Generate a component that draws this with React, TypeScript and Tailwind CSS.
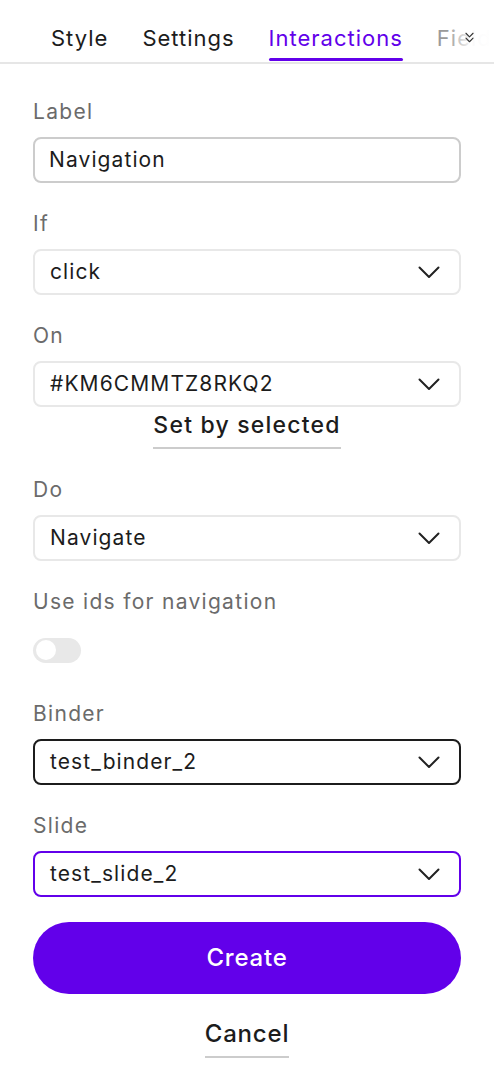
import { ChevronsDown } from "lucide-react";

const font = { fontFamily: "Inter, 'Noto Sans', sans-serif" };

function Chevron() {
  return (
    <svg width="22" height="13" viewBox="0 0 22 13" fill="none" className="shrink-0">
      <path d="M1.5 1.5 L11 11 L20.5 1.5" stroke="#222" strokeWidth="2" strokeLinecap="round" strokeLinejoin="round" />
    </svg>
  );
}

function FieldLabel({ children }: { children: React.ReactNode }) {
  return (
    <div className="h-[28px] leading-[28px] text-[21px] tracking-[1.3px] text-[#6b6b6b] mb-[11px] whitespace-nowrap">
      {children}
    </div>
  );
}

function Select({ value, border }: { value: string; border: string }) {
  return (
    <div className={`h-[46px] w-full rounded-[8px] border-2 ${border} bg-white flex items-center justify-between pl-[15px] pr-[19px]`}>
      <span className="text-[21px] tracking-[1.1px] text-[#1c1c1c]">{value}</span>
      <Chevron />
    </div>
  );
}

export default function App() {
  const tabs = ["Style", "Settings", "Interactions", "Fields"];
  return (
    <div className="w-[494px] h-[1084px] bg-white overflow-hidden" style={font}>
      <div className="relative h-[64px] border-b-2 border-[#e6e6e6] overflow-hidden">
        <div className="flex items-start gap-[34px] pl-[51px] pt-[22px] whitespace-nowrap">
          {tabs.map((t) => (
            <div key={t} className="flex flex-col items-stretch">
              <span
                className={`text-[22px] tracking-[1px] leading-[32px] ${
                  t === "Interactions" ? "text-[#6200ea]" : t === "Fields" ? "text-[#9a9a9a]" : "text-[#1c1c1c]"
                }`}
              >
                {t}
              </span>
              <div className={`h-[3px] mt-[4px] rounded-full ${t === "Interactions" ? "bg-[#6200ea]" : "bg-transparent"}`} />
            </div>
          ))}
        </div>
        <div className="absolute right-0 top-0 h-[60px] w-[46px] bg-gradient-to-r from-white/0 via-white/95 to-white flex items-start justify-end pr-[16px] pt-[29px]">
          <ChevronsDown size={17} strokeWidth={1.6} color="#333" />
        </div>
      </div>

      <div className="px-[33px] pt-[34px] flex flex-col">
        <FieldLabel>Label</FieldLabel>
        <div className="h-[46px] w-full rounded-[8px] border-2 border-[#cccccc] flex items-center pl-[14px]">
          <span className="text-[21px] tracking-[1.1px] text-[#1c1c1c]">Navigation</span>
        </div>

        <div className="mt-[27px]">
          <FieldLabel>If</FieldLabel>
          <Select value="click" border="border-[#e8e8e8]" />
        </div>

        <div className="mt-[27px]">
          <FieldLabel>On</FieldLabel>
          <Select value="#KM6CMMTZ8RKQ2" border="border-[#e8e8e8]" />
          <div className="flex justify-center">
            <button className="pt-[4px] pb-[8px] border-b-2 border-[#cccccc] text-[23px] tracking-[1.2px] leading-[28px] font-medium text-[#1c1c1c]">
              Set by selected
            </button>
          </div>
        </div>

        <div className="mt-[27px]">
          <FieldLabel>Do</FieldLabel>
          <Select value="Navigate" border="border-[#e8e8e8]" />
        </div>

        <div className="mt-[27px]">
          <FieldLabel>Use ids for navigation</FieldLabel>
          <div className="h-[46px] flex items-center">
            <div className="w-[48px] h-[25px] rounded-full bg-[#e8e8e8] flex items-center pl-[3px]">
              <div className="w-[20px] h-[20px] rounded-full bg-white" />
            </div>
          </div>
        </div>

        <div className="mt-[27px]">
          <FieldLabel>Binder</FieldLabel>
          <Select value="test_binder_2" border="border-[#1c1c1c]" />
        </div>

        <div className="mt-[27px]">
          <FieldLabel>Slide</FieldLabel>
          <Select value="test_slide_2" border="border-[#6200ea]" />
        </div>

        <button className="mt-[25px] h-[72px] w-full rounded-full bg-[#6200ea] text-white text-[24px] tracking-[0.8px] font-medium">
          Create
        </button>

        <div className="flex justify-center mt-[24px]">
          <button className="pt-[2px] pb-[8px] border-b-2 border-[#cccccc] text-[24px] tracking-[0.8px] leading-[28px] font-medium text-[#1c1c1c]">
            Cancel
          </button>
        </div>
      </div>
    </div>
  );
}
